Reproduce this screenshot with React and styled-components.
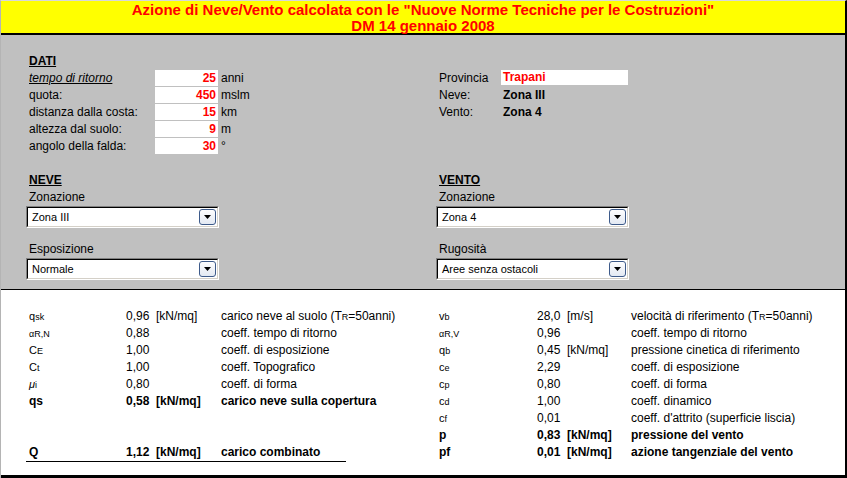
import React from 'react';
import styled, { createGlobalStyle } from 'styled-components';

const Global = createGlobalStyle`
  html, body { margin: 0; padding: 0; background: #fff; }
  body {
    font-family: "Liberation Sans", Arial, sans-serif;
    font-size: 12px;
    color: #000;
  }
`;

const Frame = styled.div`
  width: 847px;
  height: 478px;
  box-sizing: border-box;
  border-top: 1px solid #d8d8d8;
  border-right: 2px solid #000;
  border-left: 1px solid #b4b4b4;
  display: flex;
  flex-direction: column;
  overflow: hidden;
`;

const Header = styled.header`
  flex: 0 0 auto;
  height: 31px;
  padding-top: 1px;
  box-sizing: content-box;
  background: #ffff00;
  border-bottom: 2px solid #000;
  text-align: center;
  color: #ff0000;
  font-weight: bold;
  font-size: 15px;
  line-height: 16px;
`;

const GreyPanel = styled.section`
  flex: 0 0 auto;
  height: 254px;
  box-sizing: border-box;
  background: #c0c0c0;
  padding: 18px 0 0 25px;
`;

const TwoCols = styled.div`
  display: grid;
  grid-template-columns: 410px 1fr;
  margin-top: ${p => p.$top || 0}px;
`;

const Block = styled.div`
  display: flex;
  flex-direction: column;
`;

const Heading = styled.div`
  height: 17px;
  line-height: 17px;
  padding-left: 3px;
  font-weight: bold;
  text-decoration: underline;
`;

const DataGrid = styled.div`
  display: grid;
  grid-template-columns: ${p => p.$cols};
  grid-auto-rows: 17px;
  line-height: 17px;
`;

const Label = styled.div`
  padding-left: 3px;
  white-space: nowrap;
  font-style: ${p => (p.$italic ? 'italic' : 'normal')};
  text-decoration: ${p => (p.$underline ? 'underline' : 'none')};
  font-weight: ${p => (p.$bold ? 'bold' : 'normal')};
`;

const InputCell = styled.div`
  background: #fff;
  height: 16px;
  line-height: 16px;
  text-align: right;
  padding-right: 2px;
  color: #ff0000;
  font-weight: bold;
`;

const ProvCell = styled.div`
  background: #fff;
  height: 15px;
  line-height: 15px;
  padding-left: 2px;
  color: #ff0000;
  font-weight: bold;
`;

const BoldValue = styled.div`
  padding-left: 2px;
  font-weight: bold;
`;

const FieldLabel = styled.div`
  height: 17px;
  line-height: 17px;
  padding-left: 3px;
  margin-top: ${p => p.$top || 0}px;
`;

const SelectOuter = styled.div`
  width: 193px;
  height: 22px;
  box-sizing: border-box;
  border: 1px solid;
  border-color: #808080 #ffffff #ffffff #808080;
`;

const SelectInner = styled.div`
  height: 100%;
  box-sizing: border-box;
  border: 1px solid;
  border-color: #000000 #d4d0c8 #d4d0c8 #000000;
  background: #fff;
  display: flex;
  align-items: center;
  justify-content: space-between;
  padding-left: 4px;
  padding-right: 1px;
  font-family: "Liberation Sans", Arial, sans-serif;
  font-size: 11px;
`;

const DropButton = styled.div`
  width: 17px;
  height: 16px;
  box-sizing: border-box;
  border: 1px solid #3d5a8a;
  border-radius: 3px;
  background: linear-gradient(#fdfdfe, #e3e9f3);
  display: flex;
  align-items: center;
  justify-content: center;
`;

const Select = ({ value }) => (
  <SelectOuter>
    <SelectInner>
      <span>{value}</span>
      <DropButton>
        <svg width="7" height="4" viewBox="0 0 7 4">
          <polygon points="0,0 7,0 3.5,4" fill="#000" />
        </svg>
      </DropButton>
    </SelectInner>
  </SelectOuter>
);

const WhitePanel = styled.section`
  flex: 1 1 auto;
  background: #fff;
  border-top: 1px solid #000;
  border-bottom: 3px solid #000;
  padding: 18px 0 0 25px;
  display: flex;
  gap: 90px;
`;

const ResTable = styled.div`
  display: flex;
  flex-direction: column;
`;

const ResRow = styled.div`
  display: grid;
  grid-template-columns: ${p => p.$cols};
  height: 17px;
  line-height: 17px;
  font-weight: ${p => (p.$bold ? 'bold' : 'normal')};
  border-bottom: ${p => (p.$line ? '1px solid #000' : 'none')};
`;

const Cell = styled.div`
  padding-left: 3px;
  white-space: pre;
`;

const Sym = styled.span`
  font-size: 11px;
`;

const Sub = styled.span`
  font-size: 9px;
`;

const LEFT_COLS = '97px 95px 128px';
const RIGHT_COLS = '98px 94px 190px';

const leftRows = [
  [<Sym>q<Sub>sk</Sub></Sym>, '0,96  [kN/mq]', <>carico neve al suolo (T<Sub>R</Sub>=50anni)</>],
  [<Sym><Sub>α</Sub><Sub>R,N</Sub></Sym>, '0,88', 'coeff. tempo di ritorno'],
  [<Sym>C<Sub>E</Sub></Sym>, '1,00', 'coeff. di esposizione'],
  [<Sym>C<Sub>t</Sub></Sym>, '1,00', 'coeff. Topografico'],
  [<Sym><i>μ</i><Sub>i</Sub></Sym>, '0,80', 'coeff. di forma'],
  ['qs', '0,58  [kN/mq]', 'carico neve sulla copertura', true],
];

const rightRows = [
  [<Sym>v<Sub>b</Sub></Sym>, '28,0  [m/s]', <>velocità di riferimento (T<Sub>R</Sub>=50anni)</>],
  [<Sym><Sub>α</Sub><Sub>R,V</Sub></Sym>, '0,96', 'coeff. tempo di ritorno'],
  [<Sym>q<Sub>b</Sub></Sym>, '0,45  [kN/mq]', 'pressione cinetica di riferimento'],
  [<Sym>c<Sub>e</Sub></Sym>, '2,29', 'coeff. di esposizione'],
  [<Sym>c<Sub>p</Sub></Sym>, '0,80', 'coeff. di forma'],
  [<Sym>c<Sub>d</Sub></Sym>, '1,00', 'coeff. dinamico'],
  [<Sym>c<Sub>f</Sub></Sym>, '0,01', "coeff. d'attrito (superficie liscia)"],
  ['p', '0,83  [kN/mq]', 'pressione del vento', true],
  ['pf', '0,01  [kN/mq]', 'azione tangenziale del vento', true],
];

export default function App() {
  return (
    <>
      <Global />
      <Frame>
        <Header>
          <div>Azione di Neve/Vento calcolata con le "Nuove Norme Tecniche per le Costruzioni"</div>
          <div>DM 14 gennaio 2008</div>
        </Header>

        <GreyPanel>
          <TwoCols>
            <Block>
              <Heading>DATI</Heading>
              <DataGrid $cols="129px 63px auto">
                <Label $italic $underline>tempo di ritorno</Label>
                <InputCell>25</InputCell>
                <Label>anni</Label>
                <Label>quota:</Label>
                <InputCell>450</InputCell>
                <Label>mslm</Label>
                <Label>distanza dalla costa:</Label>
                <InputCell>15</InputCell>
                <Label>km</Label>
                <Label>altezza dal suolo:</Label>
                <InputCell>9</InputCell>
                <Label>m</Label>
                <Label>angolo della falda:</Label>
                <InputCell>30</InputCell>
                <Label>°</Label>
              </DataGrid>
            </Block>
            <Block>
              <Heading />
              <DataGrid $cols="65px 127px">
                <Label>Provincia</Label>
                <ProvCell>Trapani</ProvCell>
                <Label>Neve:</Label>
                <BoldValue>Zona III</BoldValue>
                <Label>Vento:</Label>
                <BoldValue>Zona 4</BoldValue>
              </DataGrid>
            </Block>
          </TwoCols>

          <TwoCols $top={17}>
            <Block>
              <Heading>NEVE</Heading>
              <FieldLabel>Zonazione</FieldLabel>
              <Select value="Zona III" />
              <FieldLabel $top={13}>Esposizione</FieldLabel>
              <Select value="Normale" />
            </Block>
            <Block>
              <Heading>VENTO</Heading>
              <FieldLabel>Zonazione</FieldLabel>
              <Select value="Zona 4" />
              <FieldLabel $top={13}>Rugosità</FieldLabel>
              <Select value="Aree senza ostacoli" />
            </Block>
          </TwoCols>
        </GreyPanel>

        <WhitePanel>
          <ResTable>
            {leftRows.map(([s, v, d, b], i) => (
              <ResRow key={i} $cols={LEFT_COLS} $bold={b}>
                <Cell>{s}</Cell>
                <Cell>{v}</Cell>
                <Cell>{d}</Cell>
              </ResRow>
            ))}
            <ResRow $cols={LEFT_COLS} />
            <ResRow $cols={LEFT_COLS} />
            <ResRow $cols={LEFT_COLS} $bold $line>
              <Cell>Q</Cell>
              <Cell>1,12  [kN/mq]</Cell>
              <Cell>carico combinato</Cell>
            </ResRow>
          </ResTable>
          <ResTable>
            {rightRows.map(([s, v, d, b], i) => (
              <ResRow key={i} $cols={RIGHT_COLS} $bold={b}>
                <Cell>{s}</Cell>
                <Cell>{v}</Cell>
                <Cell>{d}</Cell>
              </ResRow>
            ))}
          </ResTable>
        </WhitePanel>
      </Frame>
    </>
  );
}
